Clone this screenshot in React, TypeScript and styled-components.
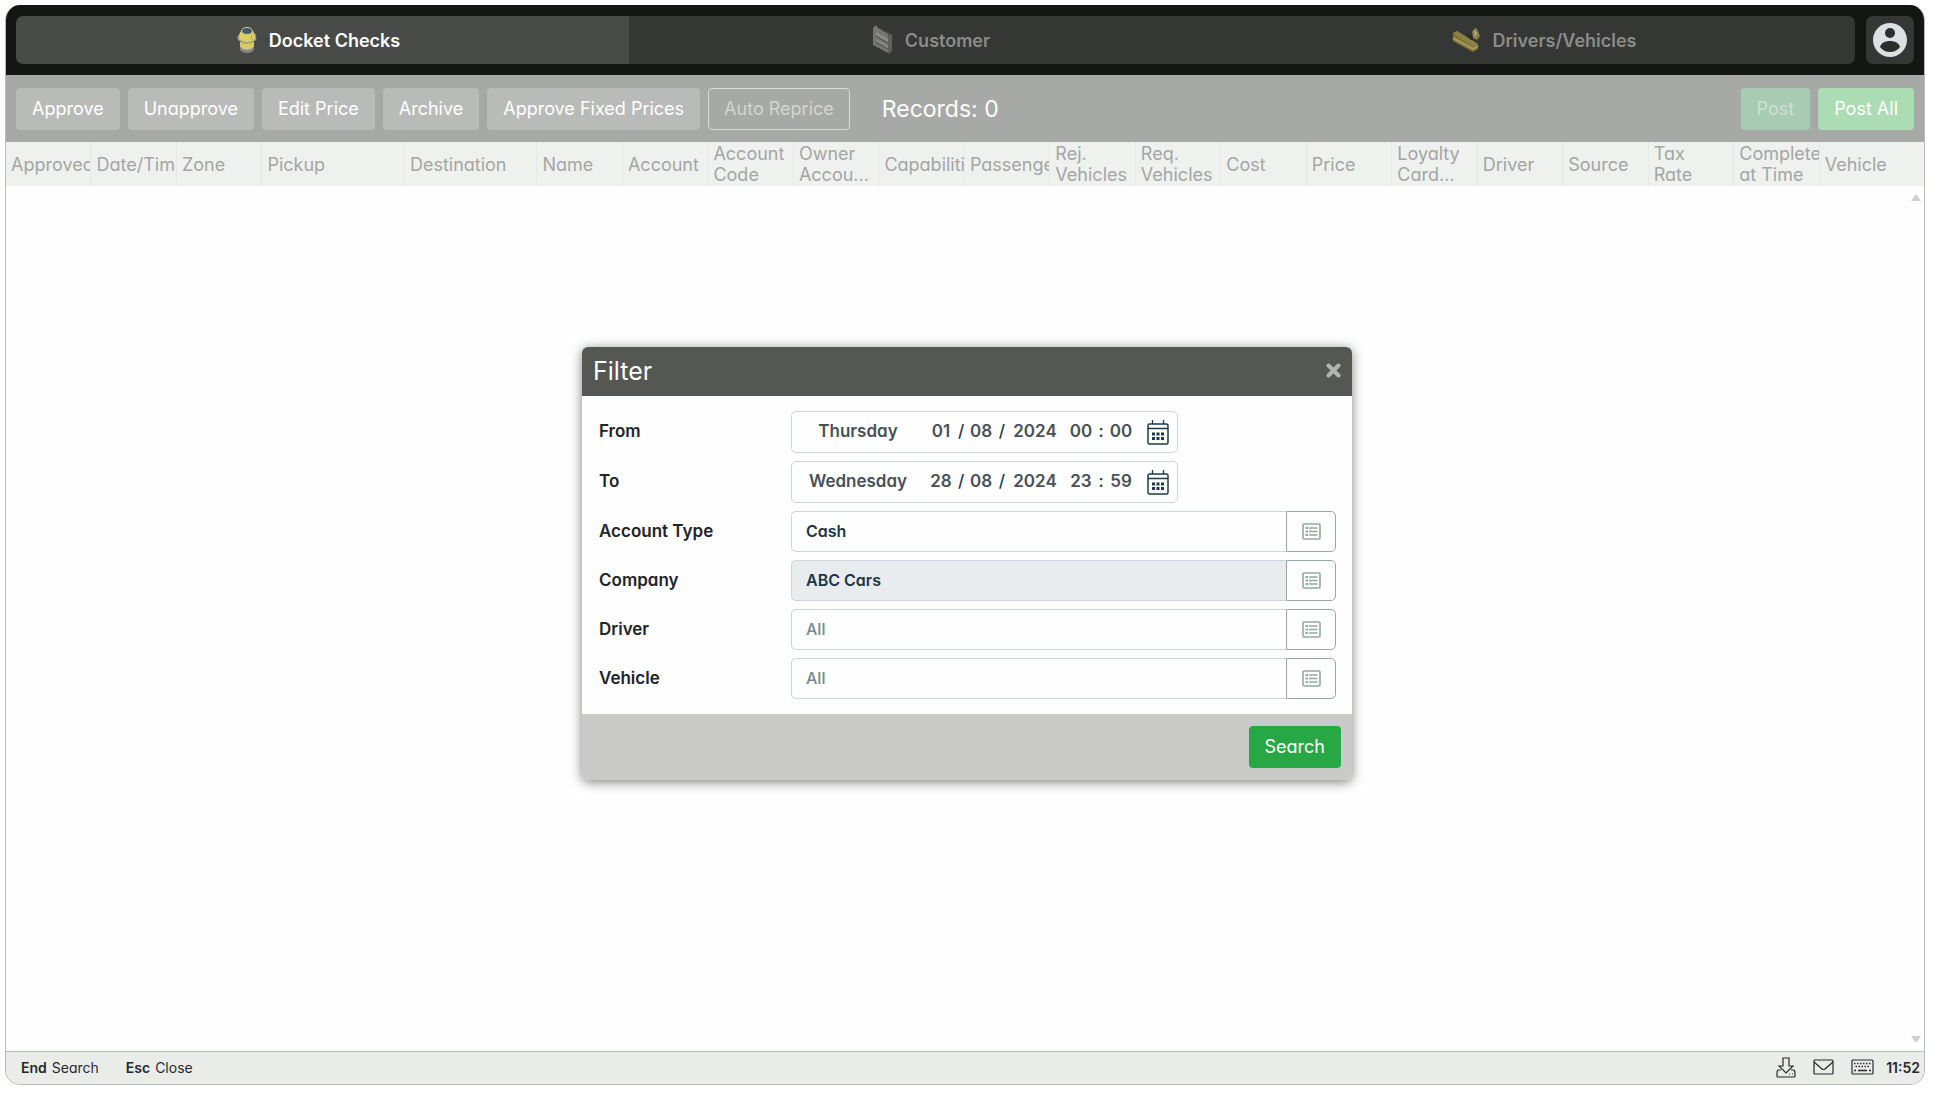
import React from "react";
import styled, { createGlobalStyle, css } from "styled-components";

const Global = createGlobalStyle`
  * { box-sizing: border-box; }
  body {
    margin: 0;
    background: #fff;
    font-family: Inter, "Liberation Sans", sans-serif;
    font-feature-settings: "cv11";
  }
  button, input { font: inherit; font-feature-settings: inherit; margin: 0; }
`;

const Page = styled.div`
  height: 100vh;
  padding: 5px 10px 10px 5px;
`;

const Window = styled.div`
  position: relative;
  height: 100%;
  display: flex;
  flex-direction: column;
  overflow: hidden;
  background: #fdfefd;
  border: 1px solid #b9bbba;
  border-top: 0;
  border-radius: 15px;
`;

const TopBar = styled.header`
  display: flex;
  gap: 11px;
  padding: 11px 10px;
  background: #141613;
`;

const Tabs = styled.nav`
  flex: 1;
  display: grid;
  grid-template-columns: repeat(3, 1fr);
  height: 48px;
  border-radius: 7px;
  overflow: hidden;
`;

const Tab = styled.button<{ $active?: boolean }>`
  display: flex;
  align-items: center;
  justify-content: center;
  gap: 12px;
  border: 0;
  padding: 0 8px 0 0;
  font-size: 18px;
  font-weight: 600;
  color: ${(p) => (p.$active ? "#fff" : "#8b8c8a")};
  background: ${(p) => (p.$active ? "#484a47" : "#353734")};
`;

const UserButton = styled.button`
  display: flex;
  align-items: center;
  justify-content: center;
  width: 48px;
  height: 48px;
  border: 0;
  padding: 0;
  border-radius: 7px;
  background: #353734;
`;

const Toolbar = styled.div`
  display: flex;
  align-items: center;
  gap: 8px;
  padding: 13px 10px 12px;
  background: #a7a9a6;
`;

const Spacer = styled.div`
  flex: 1;
`;

type Variant = "grey" | "outline" | "mutedGreen" | "paleGreen" | "green";

const variants = {
  grey: css`background: #b9bbb8; color: #fff;`,
  outline: css`background: transparent; color: #d3d5d2; border-color: #d9dbd8;`,
  mutedGreen: css`background: #a8cbb3; color: #d0e0d3;`,
  paleGreen: css`background: #abdcb3; color: #fff;`,
  green: css`background: #28a745; color: #fff;`,
};

const Button = styled.button<{ $variant: Variant }>`
  height: 42px;
  padding: 0 15px 2px;
  border: 1px solid transparent;
  border-radius: 4px;
  font-size: 18px;
  white-space: nowrap;
  ${(p) => variants[p.$variant]}
`;

const Records = styled.span`
  margin-left: 24px;
  font-size: 23px;
  color: #fff;
`;

const Grid = styled.table`
  width: 100%;
  table-layout: fixed;
  border-collapse: separate;
  border-spacing: 0;
`;

const Heading = styled.th`
  height: 44px;
  padding: 0 0 0 5px;
  overflow: hidden;
  background: #eff1ee;
  border-right: 1px solid #e6e8e5;
  font-size: 18px;
  font-weight: 400;
  line-height: 21px;
  text-align: left;
  white-space: pre;
  color: #a3a6a5;
  &:last-child { border-right: 0; }
`;

const ScrollArea = styled.main`
  flex: 1;
  display: flex;
  flex-direction: column;
  align-items: flex-end;
  justify-content: space-between;
  padding: 8px 3px;
`;

const StatusBar = styled.footer`
  display: flex;
  align-items: center;
  height: 33px;
  padding: 0 4px 2px 15px;
  border-top: 1px solid #b9bbba;
  background: #eaecea;
  font-size: 14px;
  color: #25292b;
`;

const Shortcut = styled.span`
  margin-right: 27px;
  b { margin-right: 5px; font-weight: 600; }
`;

const Tray = styled.div`
  display: flex;
  align-items: center;
  gap: 17px;
  margin-left: auto;
`;

const Clock = styled.time`
  margin-left: -5px;
  font-weight: 600;
`;

const Overlay = styled.div`
  position: absolute;
  inset: 342px 0 auto;
  display: flex;
  justify-content: center;
`;

const Dialog = styled.form`
  width: 770px;
  margin-left: 4px;
  border-radius: 6px;
  overflow: hidden;
  background: #fdfefd;
  box-shadow: 0 2px 12px rgba(0, 0, 0, 0.5);
`;

const DialogHeader = styled.div`
  display: flex;
  align-items: center;
  justify-content: space-between;
  height: 49px;
  padding: 0 11px 2px;
  background: #555753;
`;

const Title = styled.h2`
  margin: 0;
  font-size: 25px;
  font-weight: 400;
  color: #fff;
`;

const IconButton = styled.button`
  display: flex;
  align-items: center;
  justify-content: center;
  padding: 0;
  border: 0;
  background: none;
`;

const DialogBody = styled.div`
  display: grid;
  grid-template-columns: 192px 1fr;
  align-items: center;
  row-gap: 8px;
  padding: 15px 16px 15px 17px;
  font-size: 17px;
  font-weight: 600;
  color: #212428;
`;

const Label = styled.label`
  padding-bottom: 2px;
`;

const DateBox = styled.div`
  display: grid;
  grid-template-columns: 132px 34px 6px 34px 8px 58px 34px 6px 34px 1fr;
  align-items: center;
  width: 387px;
  height: 42px;
  border: 1px solid #cdd4de;
  border-radius: 5px;
  text-align: center;
  color: #4a5058;
`;

const Segment = styled.input`
  width: 100%;
  padding: 0 0 2px;
  border: 0;
  background: none;
  text-align: center;
  color: inherit;
`;

const Weekday = styled.span`
  padding-bottom: 2px;
`;

const Mark = styled.span`
  padding-bottom: 2px;
  font-weight: 500;
  color: #1d3a4a;
`;

const Lookup = styled.div`
  display: flex;
  height: 41px;
`;

const LookupInput = styled.input`
  flex: 1;
  min-width: 0;
  padding: 0 14px 2px;
  border: 1px solid #cdd4de;
  border-right: 0;
  border-radius: 5px 0 0 5px;
  background: #fdfefd;
  font-size: 16px;
  color: #1d3442;
  &:read-only { background: #e8ecef; }
  &::placeholder { color: #7b868e; font-weight: 500; opacity: 1; }
`;

const LookupButton = styled(IconButton)`
  width: 50px;
  border: 1px solid #93ab9f;
  border-radius: 0 5px 5px 0;
`;

const DialogFooter = styled.div`
  display: flex;
  justify-content: flex-end;
  padding: 12px 11px;
  background: #cacbc9;
`;

const TankardIcon = () => (
  <svg width="20" height="26" viewBox="10 9 20 26">
    <ellipse cx="20" cy="31" rx="7" ry="4" fill="#858783" />
    <path d="M13 24v5q7 6 14 0v-5z" fill="#c9c49a" />
    <path d="M14 24v4q6 5 12 0v-4z" fill="#d9cc58" />
    <path d="M14 13q-3 4-2 9 8 6 16 0 1-5-2-9z" fill="#dccf62" />
    <path d="M11 21q9 8 18 0" fill="none" stroke="#a09c80" strokeWidth="1.500" />
    <path d="M12 17q-2 2-1 4M28 16q2 3 0 6M25 17q-2 3 1 5" fill="none" stroke="#a9a78c" />
    <ellipse cx="20" cy="13" rx="5.500" ry="3.500" fill="#3e5a6e" stroke="#d6cd80" />
  </svg>
);

const ShelfIcon = () => (
  <svg width="20" height="30" viewBox="11 7 20 30">
    <path d="M11 10l3-3 2 3 10 7v18l-15-8z" fill="#737572" />
    <path d="M26 18l4-2v17l-4 3z" fill="#5f615e" />
    <path d="M14 10l14 7" stroke="#86737b" strokeWidth="2" strokeDasharray="2 1" />
    <path d="M14 14l12 7v3l-12-7zM14 21l12 7v2l-12-7z" fill="#8c8e8b" />
    <path d="M14 18l12 7M14 24l12 7" stroke="#4b4d4a" />
  </svg>
);

const CarIcon = () => (
  <svg width="28" height="26" viewBox="6 8 28 26">
    <path d="M7 14l4-2 21 13v5l-5 3L7 22z" fill="#7d7338" />
    <path d="M7 14l4-2 21 13-5 3z" fill="#8c8142" />
    <path d="M7 19l20 11 5-3" fill="none" stroke="#a39a5f" strokeWidth="2" />
    <path d="M20 15l5 1 4-3v6l-4 2z" fill="#26282c" />
    <path d="M26 13l3-4 2 1 3 7-3 4-4-2z" fill="#8b8147" />
    <path d="M28 12l2 2-1 3" fill="none" stroke="#b2b0a0" strokeWidth="1.500" />
  </svg>
);

const UserIcon = () => (
  <svg width="36" height="36" viewBox="0 0 36 36">
    <circle cx="18" cy="18" r="17" fill="#dcdfe3" />
    <circle cx="18" cy="11" r="5" fill="#2c2e2c" />
    <path d="M8 25c1-4 5-6 10-6s9 2 10 6c-2 3-6 5-10 5s-8-2-10-5z" fill="#2c2e2c" />
  </svg>
);

const CalendarIcon = () => (
  <svg width="22" height="25" viewBox="0 0 22 25" fill="none" stroke="#1d3a4a">
    <rect x="1" y="4" width="20" height="20" rx="1.500" strokeWidth="1.500" />
    <path d="M1 8.500h20M5.500 0v4M16.500 0v4" strokeWidth="1.300" />
    <path d="M5 14h12M5 18.500h12" strokeWidth="3" strokeDasharray="3 1.500" />
  </svg>
);

const ListIcon = () => (
  <svg width="19" height="17" viewBox="0 0 19 17" fill="none" stroke="#93ab9f">
    <rect x="1" y="1" width="17" height="15" rx="1" strokeWidth="1.600" />
    <path d="M3.500 5h2.500M3.500 8.500h2.500M3.500 12h2.500" strokeWidth="2" />
    <path d="M7 5h8.500M7 8.500h8.500M7 12h8.500" strokeWidth="1.400" />
  </svg>
);

const CloseIcon = () => (
  <svg width="15" height="15" viewBox="0 0 15 15">
    <path d="M2.500 2.500l10 10M12.500 2.500l-10 10" stroke="#b4b5b3" strokeWidth="4" strokeLinecap="round" />
  </svg>
);

const DownloadIcon = () => (
  <svg width="20" height="21" viewBox="0 0 20 21" fill="none" stroke="#25292b" strokeWidth="1.200">
    <path d="M7 1h6v8h4l-7 7-7-7h4z" />
    <path d="M5 13H2l-1 2v4q0 1 1 1h16q1 0 1-1v-4l-1-2h-3M13 17h1M16 17h1" />
  </svg>
);

const MailIcon = () => (
  <svg width="21" height="16" viewBox="0 0 21 16" fill="none" stroke="#25292b" strokeWidth="1.200">
    <rect x="1" y="1" width="19" height="14" rx="1" />
    <path d="M1 3l8 7q1.500 1 3 0l8-7" />
  </svg>
);

const KeyboardIcon = () => (
  <svg width="23" height="16" viewBox="0 0 23 16" fill="none" stroke="#25292b" strokeWidth="1.200">
    <rect x="1" y="1" width="21" height="14" rx="1" />
    <path d="M3 4.500h17M4.500 7.500h15" strokeWidth="1.500" strokeDasharray="1.500 1.500" />
    <path d="M3 11.500h2M7 11.500h9M18 11.500h2" strokeWidth="1.500" />
  </svg>
);

const Arrow = ({ down }: { down?: boolean }) => (
  <svg width="10" height="8" viewBox="0 0 10 8">
    <path d={down ? "M0 1h10L6 7H4z" : "M0 7h10L6 1H4z"} fill="#cfd1cf" />
  </svg>
);

const columns: [string, number][] = [
  ["Approved", 60],
  ["Date/Time", 60],
  ["Zone", 60],
  ["Pickup", 100],
  ["Destination", 93],
  ["Name", 60],
  ["Account", 60],
  ["Account\nCode", 60],
  ["Owner\nAccou...", 60],
  ["Capabilities", 60],
  ["Passengers", 60],
  ["Rej.\nVehicles", 60],
  ["Req.\nVehicles", 60],
  ["Cost", 60],
  ["Price", 60],
  ["Loyalty\nCard...", 60],
  ["Driver", 60],
  ["Source", 60],
  ["Tax\nRate", 60],
  ["Completed\nat Time", 60],
  ["Vehicle", 73],
];

const dates = [
  { label: "From", weekday: "Thursday", parts: ["01", "08", "2024", "00", "00"] },
  { label: "To", weekday: "Wednesday", parts: ["28", "08", "2024", "23", "59"] },
];

const lookups = [
  { label: "Account Type", value: "Cash" },
  { label: "Company", value: "ABC Cars", locked: true },
  { label: "Driver", value: "" },
  { label: "Vehicle", value: "" },
];

function DateField({ label, weekday, parts }: (typeof dates)[number]) {
  const [day, month, year, hour, minute] = parts;
  return (
    <>
      <Label htmlFor={label}>{label}</Label>
      <DateBox>
        <Weekday>{weekday}</Weekday>
        <Segment id={label} aria-label={`${label} day`} defaultValue={day} />
        <Mark>/</Mark>
        <Segment aria-label={`${label} month`} defaultValue={month} />
        <Mark>/</Mark>
        <Segment aria-label={`${label} year`} defaultValue={year} />
        <Segment aria-label={`${label} hour`} defaultValue={hour} />
        <Mark>:</Mark>
        <Segment aria-label={`${label} minute`} defaultValue={minute} />
        <IconButton type="button" aria-label={`${label} calendar`}>
          <CalendarIcon />
        </IconButton>
      </DateBox>
    </>
  );
}

export default function App() {
  return (
    <Page>
      <Global />
      <Window>
        <TopBar>
          <Tabs>
            <Tab $active><TankardIcon />Docket Checks</Tab>
            <Tab><ShelfIcon />Customer</Tab>
            <Tab><CarIcon />Drivers/Vehicles</Tab>
          </Tabs>
          <UserButton aria-label="User"><UserIcon /></UserButton>
        </TopBar>
        <Toolbar>
          <Button $variant="grey">Approve</Button>
          <Button $variant="grey">Unapprove</Button>
          <Button $variant="grey">Edit Price</Button>
          <Button $variant="grey">Archive</Button>
          <Button $variant="grey">Approve Fixed Prices</Button>
          <Button $variant="outline" disabled>Auto Reprice</Button>
          <Records>Records: 0</Records>
          <Spacer />
          <Button $variant="mutedGreen" disabled>Post</Button>
          <Button $variant="paleGreen">Post All</Button>
        </Toolbar>
        <Grid>
          <colgroup>
            {columns.map(([name, width]) => <col key={name} width={width} />)}
          </colgroup>
          <thead>
            <tr>
              {columns.map(([name]) => <Heading key={name}>{name}</Heading>)}
            </tr>
          </thead>
        </Grid>
        <ScrollArea>
          <Arrow />
          <Arrow down />
        </ScrollArea>
        <StatusBar>
          <Shortcut><b>End</b>Search</Shortcut>
          <Shortcut><b>Esc</b>Close</Shortcut>
          <Tray>
            <DownloadIcon />
            <MailIcon />
            <KeyboardIcon />
            <Clock>11:52</Clock>
          </Tray>
        </StatusBar>
        <Overlay>
          <Dialog onSubmit={(e) => e.preventDefault()}>
            <DialogHeader>
              <Title>Filter</Title>
              <IconButton type="button" aria-label="Close"><CloseIcon /></IconButton>
            </DialogHeader>
            <DialogBody>
              {dates.map((d) => <DateField key={d.label} {...d} />)}
              {lookups.map(({ label, value, locked }) => (
                <React.Fragment key={label}>
                  <Label htmlFor={label}>{label}</Label>
                  <Lookup>
                    <LookupInput id={label} defaultValue={value} placeholder="All" readOnly={locked} />
                    <LookupButton type="button" aria-label={`Choose ${label}`}><ListIcon /></LookupButton>
                  </Lookup>
                </React.Fragment>
              ))}
            </DialogBody>
            <DialogFooter>
              <Button $variant="green" type="submit">Search</Button>
            </DialogFooter>
          </Dialog>
        </Overlay>
      </Window>
    </Page>
  );
}
